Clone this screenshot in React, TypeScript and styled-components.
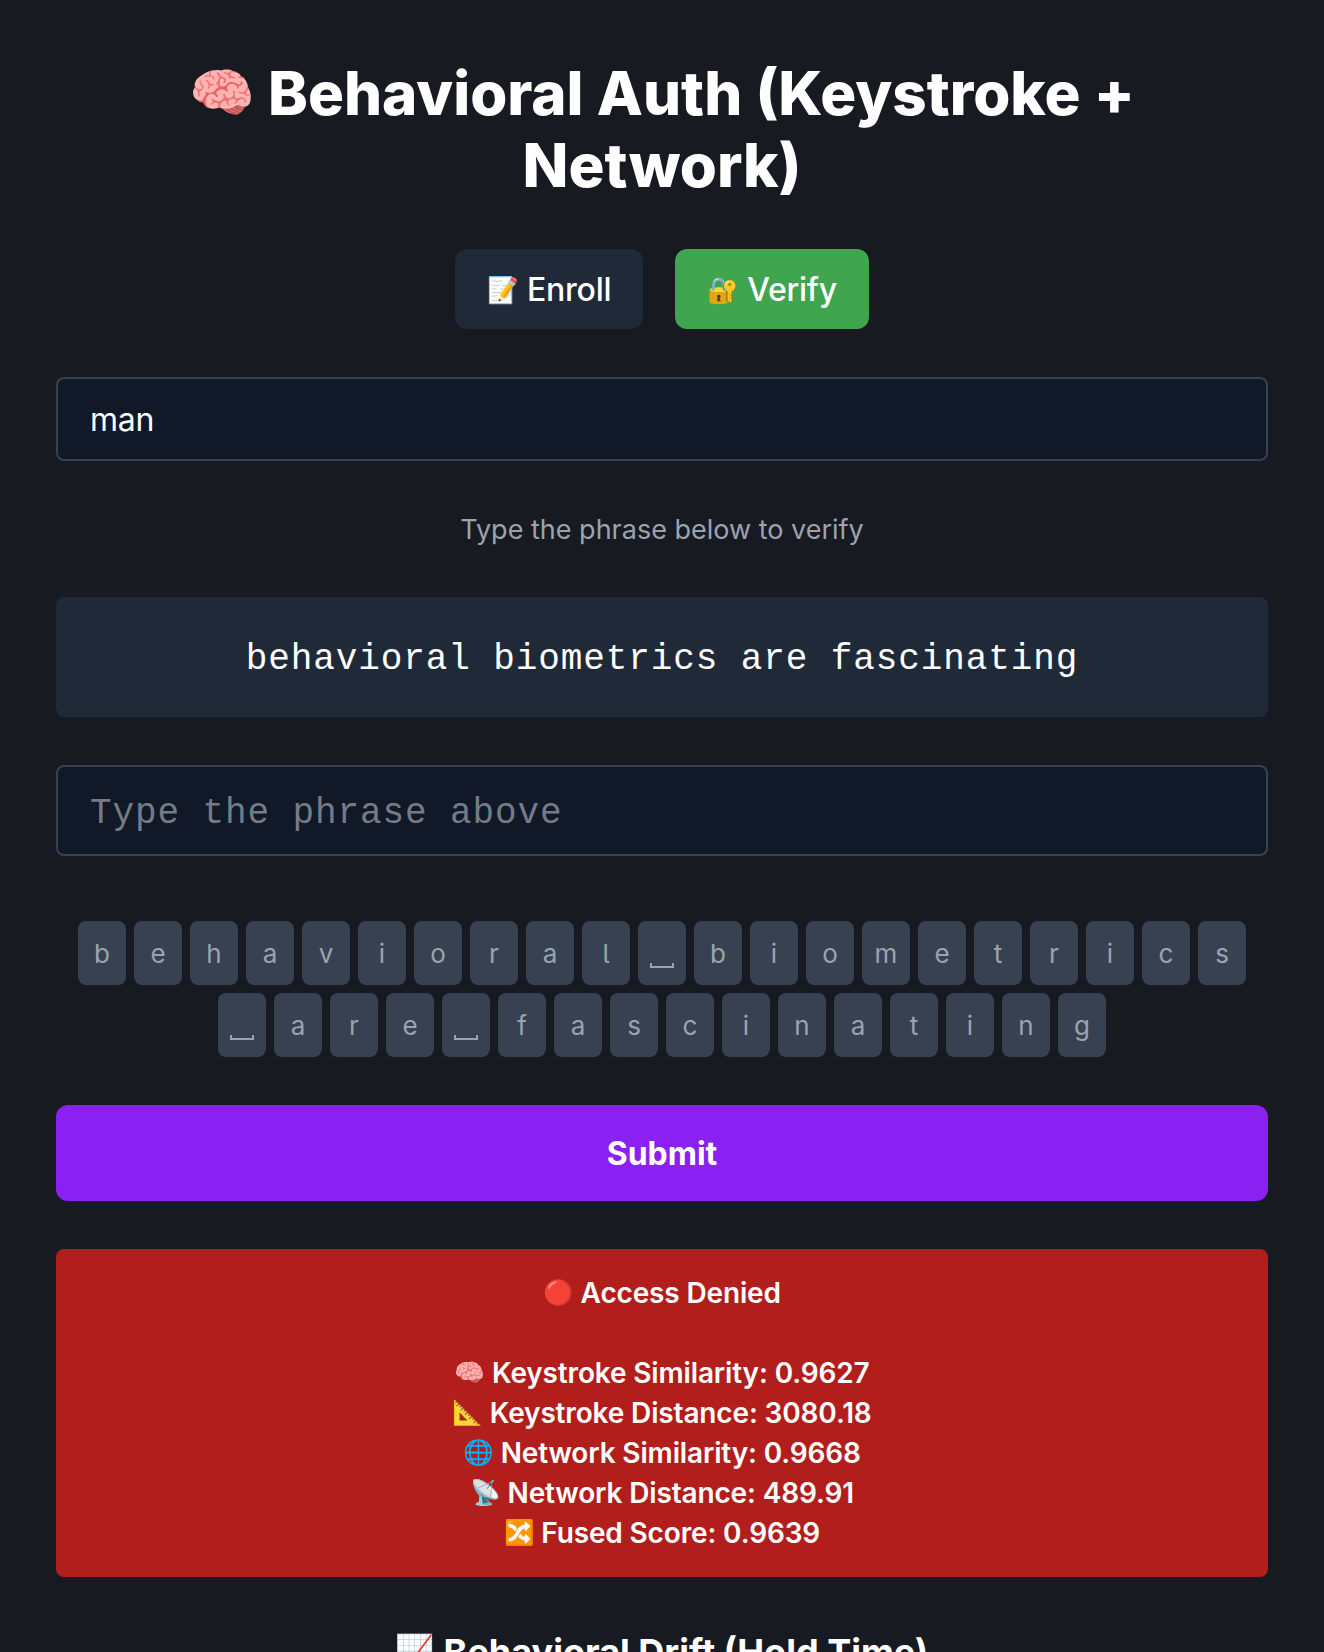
import styled, { createGlobalStyle } from "styled-components";

const GlobalStyle = createGlobalStyle`
  html, body {
    margin: 0;
    height: 1652px;
    overflow: hidden;
    background-color: #171a21;
  }
  * {
    box-sizing: border-box;
  }
`;

const sans = `Inter, "Noto Sans", "Noto Color Emoji", sans-serif`;
const mono = `"Liberation Mono", "DejaVu Sans Mono", "Noto Color Emoji", monospace`;

const Page = styled.div`
  display: flex;
  flex-direction: column;
  gap: 48px;
  padding: 56px;
  font-family: ${sans};
  color: #ffffff;
`;

const Title = styled.h1`
  margin: 1px 80px 0;
  font-size: 60px;
  line-height: 72px;
  font-weight: 800;
  text-align: center;
`;

const Emoji = styled.span<{ $size?: number }>`
  font-size: ${(p) => p.$size ?? 0.88}em;
  line-height: 0;
  vertical-align: 0.08em;
`;

const Tabs = styled.div`
  display: flex;
  justify-content: center;
  gap: 32px;
`;

const Tab = styled.button<{ $active?: boolean }>`
  height: 80px;
  padding: 0 32px;
  border: none;
  border-radius: 12px;
  background-color: ${(p) => (p.$active ? "#3fa64f" : "#1f2937")};
  color: #ffffff;
  font-family: ${sans};
  font-size: 32px;
  font-weight: 500;
  letter-spacing: -0.25px;
`;

const NameInput = styled.input`
  height: 84px;
  padding: 0 32px;
  border: 2px solid #374151;
  border-radius: 8px;
  background-color: #111827;
  color: #ffffff;
  font-family: ${sans};
  font-size: 32px;
  letter-spacing: -0.25px;
`;

const Hint = styled.p`
  margin: 0;
  padding-top: 1px;
  font-size: 27px;
  line-height: 39px;
  color: #9ca3af;
  text-align: center;
`;

const Phrase = styled.div`
  height: 120px;
  display: flex;
  align-items: center;
  justify-content: center;
  padding-top: 4px;
  border-radius: 8px;
  background-color: #1f2937;
  font-family: ${mono};
  font-size: 36px;
  letter-spacing: 0.9px;
`;

const PhraseInput = styled.input`
  height: 91px;
  padding: 5px 32px 0;
  border: 2px solid #374151;
  border-radius: 8px;
  background-color: #111827;
  color: #ffffff;
  font-family: ${mono};
  font-size: 36px;
  letter-spacing: 0.9px;

  &::placeholder {
    color: #757b87;
    opacity: 1;
  }
`;

const Keys = styled.div`
  display: flex;
  flex-wrap: wrap;
  justify-content: center;
  gap: 8px;
  padding-top: 17px;
`;

const Key = styled.span`
  width: 48px;
  height: 64px;
  display: flex;
  align-items: center;
  justify-content: center;
  border-radius: 8px;
  background-color: #374151;
  color: #9ca3af;
  font-size: 26px;
  font-feature-settings: "cv05";
`;

const SpaceMark = styled.span`
  width: 24px;
  height: 5px;
  margin-top: 25px;
  border: 2px solid #9ca3af;
  border-top: none;
`;

const Submit = styled.button`
  height: 96px;
  border: none;
  border-radius: 12px;
  background-color: #8b20f2;
  color: #ffffff;
  font-family: ${sans};
  font-size: 32px;
  font-weight: 700;
`;

const Result = styled.div`
  padding: 24px;
  border-radius: 8px;
  background-color: #b11e1b;
  font-size: 28px;
  line-height: 40px;
  font-weight: 600;
  letter-spacing: -0.15px;
  text-align: center;
`;

const ResultLine = styled.div`
  min-height: 40px;
`;

const DriftTitle = styled.h2`
  margin: 0;
  font-size: 36px;
  line-height: 54px;
  font-weight: 700;
  text-align: center;
`;

const phrase = "behavioral biometrics are fascinating";

const resultLines = [
  ["🔴", "Access Denied"],
  [],
  ["🧠", "Keystroke Similarity: 0.9627"],
  ["📐", "Keystroke Distance: 3080.18"],
  ["🌐", "Network Similarity: 0.9668"],
  ["📡", "Network Distance: 489.91"],
  ["🔀", "Fused Score: 0.9639"],
];

export default function App() {
  return (
    <>
      <GlobalStyle />
      <Page>
        <Title>
          <Emoji>🧠</Emoji> Behavioral Auth (Keystroke + Network)
        </Title>
        <Tabs>
          <Tab>
            <Emoji $size={0.8}>📝</Emoji> Enroll
          </Tab>
          <Tab $active>
            <Emoji $size={0.8}>🔐</Emoji> Verify
          </Tab>
        </Tabs>
        <NameInput value="man" readOnly />
        <Hint>Type the phrase below to verify</Hint>
        <Phrase>{phrase}</Phrase>
        <PhraseInput placeholder="Type the phrase above" readOnly />
        <Keys>
          {phrase.split("").map((ch, i) => (
            <Key key={i}>{ch === " " ? <SpaceMark /> : ch}</Key>
          ))}
        </Keys>
        <Submit>Submit</Submit>
        <Result>
          {resultLines.map(([icon, text], i) => (
            <ResultLine key={i}>
              {icon && <Emoji>{icon}</Emoji>} {text}
            </ResultLine>
          ))}
        </Result>
        <DriftTitle>
          <Emoji>📈</Emoji> Behavioral Drift (Hold Time)
        </DriftTitle>
      </Page>
    </>
  );
}
